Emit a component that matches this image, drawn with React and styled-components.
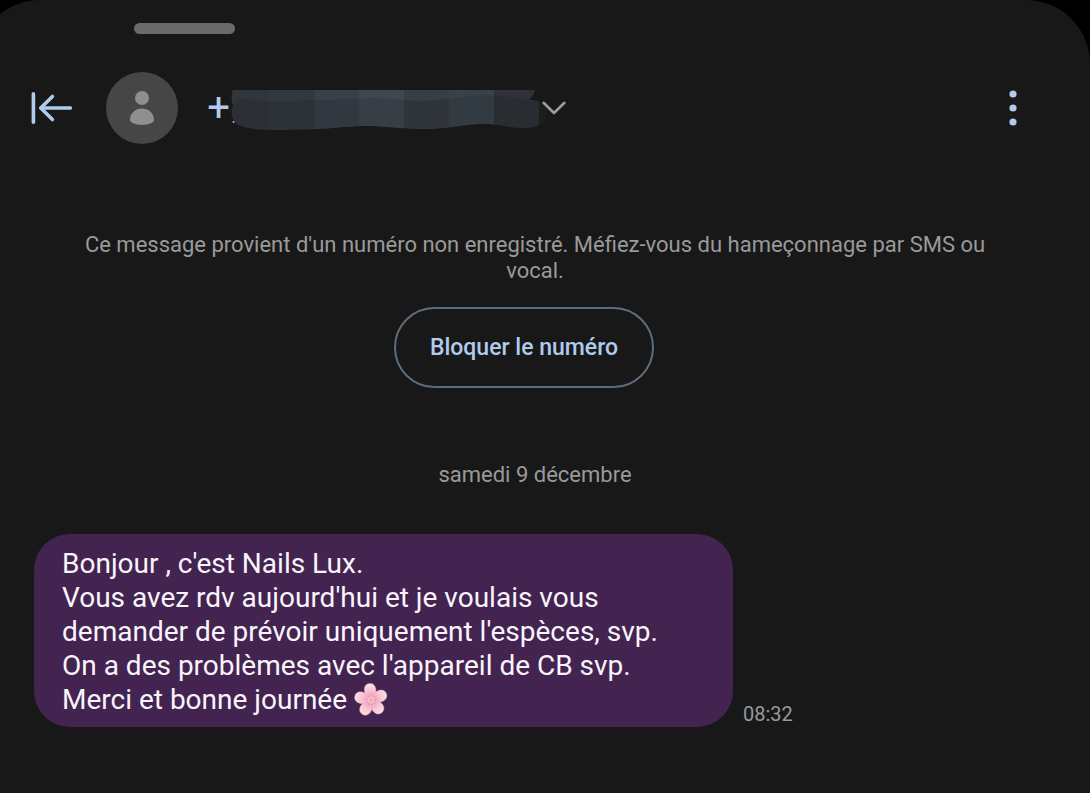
import styled, { createGlobalStyle } from "styled-components";

const App = () => {
  return (
    <>
      <GlobalStyle />
      <Panel>
        <Handle />
        <Header>
          <BackButton type="button" aria-label="Retour">
            <BackIcon />
          </BackButton>
          <Avatar>
            <PersonIcon />
          </Avatar>
          <Contact type="button" aria-label="Détails du contact">
            <Prefix>+</Prefix>
            <HiddenNumber />
            <ChevronIcon />
          </Contact>
          <MenuButton type="button" aria-label="Plus d'options">
            <DotsIcon />
          </MenuButton>
        </Header>
        <Conversation>
          <Notice>
            Ce message provient d'un numéro non enregistré. Méfiez-vous du
            hameçonnage par SMS ou vocal.
          </Notice>
          <Actions>
            <BlockButton type="button">Bloquer le numéro</BlockButton>
          </Actions>
          <DateLabel>samedi 9 décembre</DateLabel>
          <Message>
            <Bubble>
              <p>Bonjour , c'est Nails Lux.</p>
              <p>
                Vous avez rdv aujourd'hui et je voulais vous demander de prévoir
                uniquement l'espèces, svp.
              </p>
              <p>On a des problèmes avec l'appareil de CB svp.</p>
              <p>
                Merci et bonne journée <Blossom />
              </p>
            </Bubble>
            <Time>08:32</Time>
          </Message>
        </Conversation>
      </Panel>
    </>
  );
};

// Icons
const BackIcon = () => (
  <svg width="44" height="36" viewBox="0 0 44 36" fill="none" stroke="#b0cbec" strokeWidth="3.6" strokeLinecap="round" strokeLinejoin="round">
    <path d="M3.4 3.8V32.2" />
    <path d="M40.4 18H11" />
    <path d="M22.4 6.4L10.8 18L22.4 29.6" />
  </svg>
);

const PersonIcon = () => (
  <svg width="26" height="36" viewBox="0 0 26 36" fill="#8f8f8f">
    <circle cx="13" cy="8" r="7" />
    <path d="M13 18.6C19.6 18.6 25 23.4 25 29.6C25 31.4 24.2 32.2 22.8 32.8C20 34.2 16.6 35 13 35C9.4 35 6 34.2 3.2 32.8C1.8 32.2 1 31.4 1 29.6C1 23.4 6.4 18.6 13 18.6Z" />
  </svg>
);

const ChevronIcon = () => (
  <svg width="24" height="14" viewBox="0 0 24 14" fill="none" stroke="#9c9c9c" strokeWidth="2.6" strokeLinecap="round" strokeLinejoin="round">
    <path d="M1.6 1.8L12 12L22.4 1.8" />
  </svg>
);

const DotsIcon = () => (
  <svg width="8" height="36" viewBox="0 0 8 36" fill="#b0cbec">
    <circle cx="4" cy="4" r="3.6" />
    <circle cx="4" cy="18" r="3.6" />
    <circle cx="4" cy="32" r="3.6" />
  </svg>
);

const upperTiles = ["#30363c", "#32383f", "#394047", "#3f464f", "#393d48", "#3a414b", "#2f3139"];
const lowerTiles = ["#2c2f36", "#2d3138", "#31383f", "#363e46", "#30343b", "#333b42", "#292c30"];
const tileEdges = [0, 38, 83, 128, 173, 218, 263, 308];

const HiddenNumber = () => (
  <svg width="311" height="44" viewBox="0 -4 311 44" overflow="visible">
    <clipPath id="upper">
      <path d="M2 0H304C303 5 300 9 296 11V20H5C1 16-1 6 2 0Z" />
    </clipPath>
    <clipPath id="lower">
      <path d="M12 9C30 10 40 13 60 11C90 9 120 10 140 8C165 8 180 13 204 10C225 8 238 5 254 5C275 6 290 10 302 10C311 11 317 17 316 24C315 33 306 38 296 38C280 39 270 34 252 34C235 34 215 40 185 39C160 38 150 36 132 36C110 37 90 40 45 40C25 40 12 38 6 34C-1 28-1 18 4 13C6 10 9 9 12 9Z" />
    </clipPath>
    <g clipPath="url(#upper)">
      {upperTiles.map((fill, i) => (
        <rect key={i} x={tileEdges[i]} y="0" width={tileEdges[i + 1] - tileEdges[i]} height="20" fill={fill} />
      ))}
    </g>
    <g clipPath="url(#lower)">
      <rect x="308" y="0" width="10" height="40" fill="#1d1d1d" />
      {lowerTiles.map((fill, i) => (
        <rect key={i} x={tileEdges[i]} y="0" width={tileEdges[i + 1] - tileEdges[i]} height="40" fill={fill} />
      ))}
    </g>
    <circle cx="2.5" cy="32" r="1" fill="#a9bfd8" />
  </svg>
);

const Blossom = () => (
  <Flower width="34" height="34" viewBox="-17 -17 34 34" role="img" aria-label="Fleur de cerisier">
    <defs>
      <radialGradient id="petal" gradientUnits="userSpaceOnUse" cx="0" cy="0" r="17">
        <stop offset="0.2" stopColor="#f3a3bd" />
        <stop offset="0.6" stopColor="#f9c6d4" />
        <stop offset="1" stopColor="#fde3e8" />
      </radialGradient>
    </defs>
    {[0, 72, 144, 216, 288].map((angle) => (
      <path
        key={angle}
        transform={`rotate(${angle - 5})`}
        d="M0 0C-3-3-6-6-5.8-10.5C-5.5-14.5-3-16.8 0-16.6C3-16.8 5.5-14.5 5.8-10.5C6-6 3-3 0 0Z"
        fill="url(#petal)"
        stroke="#efa9bd"
        strokeWidth="0.4"
      />
    ))}
    <circle r="5" fill="#f7b9ca" />
    <circle r="4.4" fill="none" stroke="#d98aa3" strokeWidth="1.2" strokeDasharray="1.2 1.6" />
    <circle r="1.2" fill="#e9a0b5" />
  </Flower>
);

// Styling
const GlobalStyle = createGlobalStyle`
  * {
    box-sizing: border-box;
  }
  body {
    margin: 0;
    background: #000;
    color: #9a9a9a;
    font-family: Roboto, "Noto Sans", sans-serif;
    overflow-x: hidden;
  }
  p {
    margin: 0;
  }
  button {
    padding: 0;
    border: none;
    background: none;
    font-family: inherit;
    cursor: pointer;
  }
  svg {
    display: block;
    flex-shrink: 0;
  }
`;

const Panel = styled.main`
  min-height: 100vh;
  margin-left: -24px;
  padding: 23px 20px 66px 24px;
  border-radius: 64px 64px 0 0;
  background: #181818;
`;

const Handle = styled.div`
  width: 101px;
  height: 11px;
  margin-left: 134px;
  border-radius: 6px;
  background: #6a6a6a;
`;

const Header = styled.header`
  display: flex;
  align-items: center;
  margin-top: 38px;
  padding: 0 53px 0 30px;
`;

const BackButton = styled.button`
  margin-right: 32px;
`;

const Avatar = styled.div`
  display: flex;
  align-items: center;
  justify-content: center;
  width: 72px;
  height: 72px;
  margin-right: 28px;
  border-radius: 50%;
  background: #464646;
`;

const Contact = styled.button`
  display: flex;
  align-items: center;
`;

const Prefix = styled.span`
  width: 25px;
  color: #b0cbec;
  font-size: 40px;
  line-height: 40px;
`;

const MenuButton = styled.button`
  margin-left: auto;
`;

const Conversation = styled.section`
  padding-top: 88px;
`;

const Notice = styled.p`
  max-width: 920px;
  margin: 0 auto;
  font-size: 22px;
  line-height: 26px;
  text-align: center;
`;

const Actions = styled.div`
  display: flex;
  justify-content: center;
  padding: 23px 22px 0 0;
`;

const BlockButton = styled.button`
  height: 81px;
  padding: 0 34px;
  border: 2px solid #5d6c7d;
  border-radius: 41px;
  color: #b0cbec;
  font-size: 23px;
  font-weight: 500;
`;

const DateLabel = styled.p`
  margin-top: 74px;
  font-size: 22px;
  line-height: 26px;
  text-align: center;
`;

const Message = styled.div`
  display: flex;
  align-items: flex-end;
  gap: 10px;
  margin-top: 46px;
  padding-left: 34px;
`;

const Bubble = styled.div`
  max-width: 699px;
  padding: 13px 28px 10px;
  border-radius: 36px;
  background: #432450;
  color: #faf4fc;
  font-size: 28px;
  line-height: 34px;
`;

const Flower = styled.svg`
  display: inline-block;
  vertical-align: top;
`;

const Time = styled.time`
  font-size: 20px;
  line-height: 26px;
`;

export default App;
